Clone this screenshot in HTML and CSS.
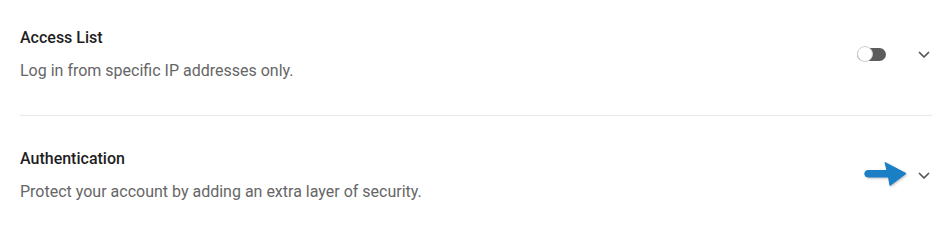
FILE: index.html
```html
<!DOCTYPE html>
<html>
<head>
<meta charset="utf-8">
<link rel="stylesheet" href="styles.css">
</head>
<body>
<div class="list">
  <div class="row first">
    <div class="text">
      <div class="title">Access List</div>
      <div class="desc">Log in from specific IP addresses only.</div>
    </div>
    <div class="controls">
      <span class="toggle"><span class="knob"></span></span>
      <svg class="chev" width="12" height="8" viewBox="0 0 12 8"><path d="M1.5 1.5 L6 6 L10.5 1.5" fill="none" stroke="#555" stroke-width="1.7" stroke-linecap="round" stroke-linejoin="round"/></svg>
    </div>
  </div>
  <div class="row">
    <div class="text">
      <div class="title">Authentication</div>
      <div class="desc">Protect your account by adding an extra layer of security.</div>
    </div>
    <div class="controls">
      <svg class="arrow" width="46" height="28" viewBox="0 0 46 28"><path d="M4 9.5 H23 L21 1.5 L42 12.5 L26 24.5 L24.5 16 H4 A3.25 3.25 0 0 1 4 9.5 Z" fill="#1b7fc6" stroke="#1b7fc6" stroke-width="1" stroke-linejoin="round"/></svg>
      <svg class="chev" width="12" height="8" viewBox="0 0 12 8"><path d="M1.5 1.5 L6 6 L10.5 1.5" fill="none" stroke="#555" stroke-width="1.7" stroke-linecap="round" stroke-linejoin="round"/></svg>
    </div>
  </div>
</div>
</body>
</html>
```
FILE: styles.css
```css
html, body { margin: 0; padding: 0; background: #fff; }
body { font-family: Roboto, "Liberation Sans", sans-serif; }
.list { padding: 0 20px; }
.row {
  display: flex;
  align-items: center;
  justify-content: space-between;
  padding: 33px 0 34px;
}
.row.first { padding-top: 28px; border-bottom: 1px solid #e8e8e8; }
.title { font-size: 16px; font-weight: 500; color: #1e1e1e; line-height: 20px; }
.desc { font-size: 16px; color: #666; line-height: 20px; margin-top: 13px; }
.controls { display: flex; align-items: center; gap: 32px; position: relative; padding-right: 2px; }
.toggle {
  position: relative;
  width: 29px; height: 13px;
  background: #5c5c5c;
  border-radius: 7px;
  display: inline-block;
}
.knob {
  position: absolute; left: 0; top: -2px;
  width: 16px; height: 16px;
  border-radius: 50%;
  background: #fff;
  border: 1px solid #d0d0d0;
  box-sizing: border-box;
}
.chev { display: block; }
.arrow { position: absolute; left: -54px; top: -11px; filter: drop-shadow(1px 1px 1px rgba(0,0,0,0.25)); }
```
